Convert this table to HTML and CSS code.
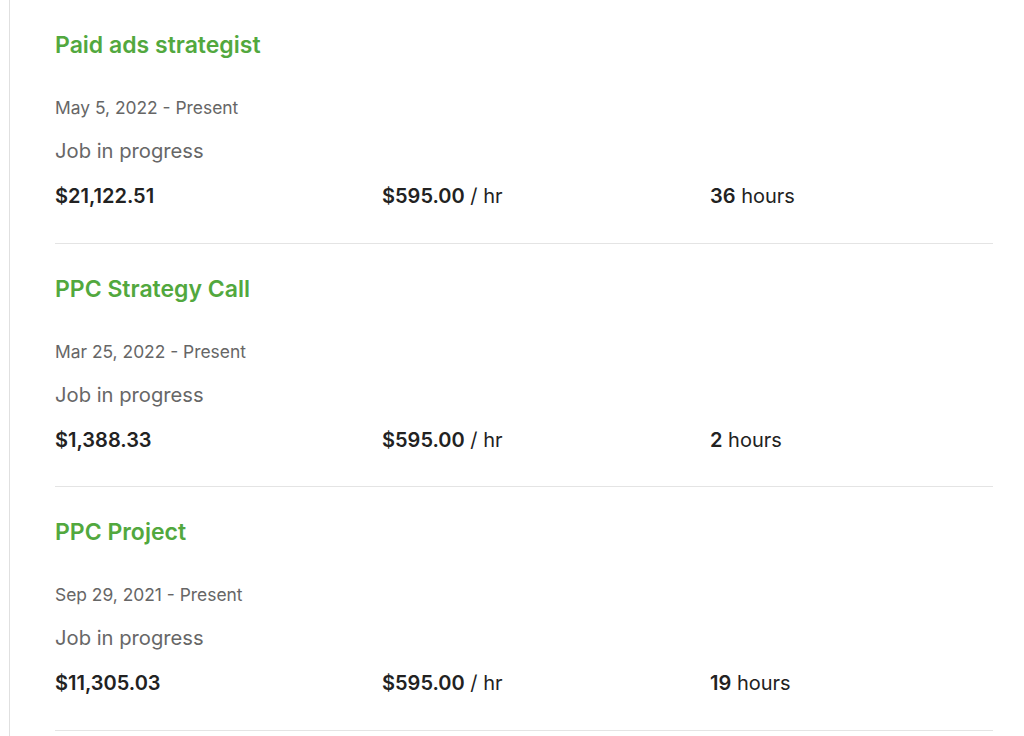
FILE: index.html
```html
<!DOCTYPE html>
<html>
<head>
<meta charset="utf-8">
<link rel="stylesheet" href="styles.css">
</head>
<body>
<div class="panel">
  <div class="job">
    <div class="title">Paid ads strategist</div>
    <div class="date">May 5, 2022 - Present</div>
    <div class="status">Job in progress</div>
    <div class="stats">
      <div class="stat"><b>$21,122.51</b></div>
      <div class="stat"><b>$595.00</b> / hr</div>
      <div class="stat"><b>36</b> hours</div>
    </div>
  </div>
  <div class="job">
    <div class="title">PPC Strategy Call</div>
    <div class="date">Mar 25, 2022 - Present</div>
    <div class="status">Job in progress</div>
    <div class="stats">
      <div class="stat"><b>$1,388.33</b></div>
      <div class="stat"><b>$595.00</b> / hr</div>
      <div class="stat"><b>2</b> hours</div>
    </div>
  </div>
  <div class="job">
    <div class="title">PPC Project</div>
    <div class="date">Sep 29, 2021 - Present</div>
    <div class="status">Job in progress</div>
    <div class="stats">
      <div class="stat"><b>$11,305.03</b></div>
      <div class="stat"><b>$595.00</b> / hr</div>
      <div class="stat"><b>19</b> hours</div>
    </div>
  </div>
</div>
</body>
</html>
```
FILE: styles.css
```css
html, body {
  margin: 0;
  padding: 0;
  background: #fff;
}
body {
  font-family: Inter, "Liberation Sans", Arial, sans-serif;
  color: #222;
}
.panel {
  margin-left: 9px;
  border-left: 1px solid #e0e0e0;
  padding: 0 31px 0 45px;
  min-height: 736px;
}
.job {
  border-bottom: 1px solid #e4e4e4;
  padding: 30px 0 34.5px;
}
.title {
  color: #52a83e;
  font-size: 23px;
  font-weight: 600;
  line-height: 30px;
}
.date {
  margin-top: 38px;
  font-size: 17.4px;
  line-height: 20px;
  color: #666;
}
.status {
  margin-top: 21px;
  font-size: 20.2px;
  line-height: 24px;
  color: #676767;
}
.stats {
  margin-top: 21px;
  display: grid;
  grid-template-columns: 327px 328px 1fr;
  font-size: 20px;
  line-height: 24px;
  color: #222;
}
.stat b {
  font-weight: 600;
}
```
